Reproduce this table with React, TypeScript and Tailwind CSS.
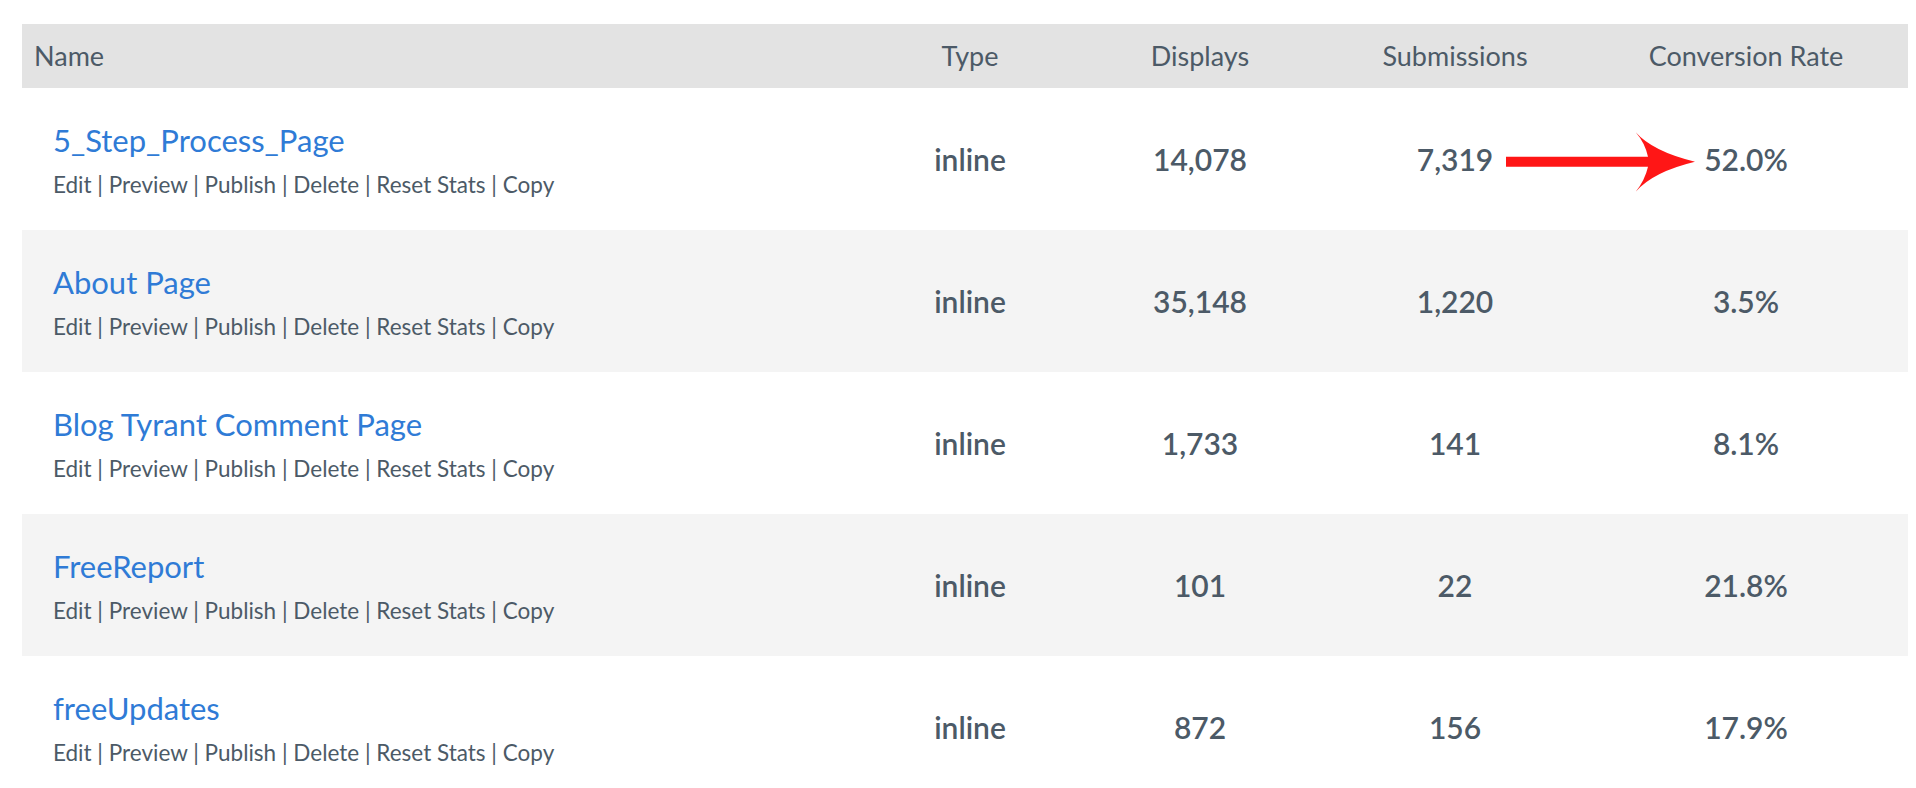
import React from "react";

const rows = [
  { name: "5_Step_Process_Page", type: "inline", displays: "14,078", subs: "7,319", rate: "52.0%", arrow: true },
  { name: "About Page", type: "inline", displays: "35,148", subs: "1,220", rate: "3.5%" },
  { name: "Blog Tyrant Comment Page", type: "inline", displays: "1,733", subs: "141", rate: "8.1%" },
  { name: "FreeReport", type: "inline", displays: "101", subs: "22", rate: "21.8%" },
  { name: "freeUpdates", type: "inline", displays: "872", subs: "156", rate: "17.9%" },
];

const actions = ["Edit", "Preview", "Publish", "Delete", "Reset Stats", "Copy"];

function Arrow() {
  return (
    <svg
      className="absolute left-[1478px] top-[40px]"
      width="200"
      height="70"
      viewBox="0 0 200 70"
    >
      <path
        d="M 6 28.7 L 148 28.7 Q 145 15 135.7 4.3 Q 153 23.7 195 33.7 Q 153 43.7 135.7 63.7 Q 145 52 148 38.7 L 6 38.7 Z"
        fill="#ff1616"
      />
    </svg>
  );
}

export default function App() {
  return (
    <div className="min-h-screen bg-white pt-[24px] pl-[22px] pr-[8px] font-['Lato',sans-serif] text-[#4c5a67]">
      <div className="w-[1886px]">
        <div className="grid h-[64px] grid-cols-[844px_208px_252px_258px_324px] items-center bg-[#e3e3e3] text-[27px]">
          <div className="pl-[12px]">Name</div>
          <div className="text-center">Type</div>
          <div className="text-center">Displays</div>
          <div className="text-center">Submissions</div>
          <div className="text-center">Conversion Rate</div>
        </div>
        {rows.map((r, i) => (
          <div
            key={r.name}
            className={`relative grid h-[142px] grid-cols-[844px_208px_252px_258px_324px] items-center ${
              i % 2 === 1 ? "bg-[#f4f4f4]" : "bg-white"
            }`}
          >
            <div className="flex h-full flex-col pl-[31px] pt-[34px]">
              <a className="text-[31px] leading-[36px] text-[#2f7bd6]">{r.name}</a>
              <div className="mt-[12px] text-[22.5px] leading-[30px]">
                {actions.map((a, j) => (
                  <span key={a}>
                    {a}
                    {j < actions.length - 1 ? " | " : ""}
                  </span>
                ))}
              </div>
            </div>
            <div className="text-center text-[30px] font-semibold">{r.type}</div>
            <div className="text-center text-[30px] font-semibold">{r.displays}</div>
            <div className="text-center text-[30px] font-semibold">{r.subs}</div>
            <div className="text-center text-[30px] font-semibold">{r.rate}</div>
            {r.arrow && <Arrow />}
          </div>
        ))}
      </div>
    </div>
  );
}
